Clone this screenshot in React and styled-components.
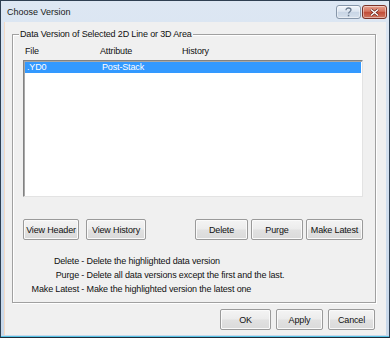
import { Fragment } from 'react';
import styled, { createGlobalStyle } from 'styled-components';

const GlobalStyle = createGlobalStyle`
  html, body {
    margin: 0;
    padding: 0;
    background: #ffffff;
  }
  body {
    font-family: "Liberation Sans", Arial, sans-serif;
  }
`;

const Window = styled.div`
  width: 390px;
  height: 338px;
  box-sizing: border-box;
  border: 1px solid #2e3f52;
  border-bottom-color: #1f2b38;
  background: linear-gradient(#dde7f3, #c8d8ea);
  padding: 0 3px 2px;
  display: flex;
  flex-direction: column;
  font-size: 9px;
  letter-spacing: -0.15px;
  color: #111;
  box-shadow: inset 0 -1px 0 #55c3e6;
`;

const TitleBar = styled.div`
  height: 21px;
  display: flex;
  align-items: center;
  padding-left: 3px;
`;

const Title = styled.span`
  flex: 1;
  font-size: 9px;
  letter-spacing: 0;
  color: #1a1a1a;
  padding-top: 1px;
`;

const CaptionButtons = styled.div`
  display: flex;
  gap: 1px;
  align-self: flex-start;
  margin-top: 4px;
  margin-right: -1px;
`;

const CaptionButton = styled.div`
  width: 25px;
  height: 14px;
  box-sizing: border-box;
  border: 1px solid ${(p) => (p.$close ? '#7a3228' : '#8797aa')};
  border-radius: 3px;
  display: flex;
  align-items: center;
  justify-content: center;
  background: ${(p) =>
    p.$close
      ? 'linear-gradient(#e6a08f 0%, #d47460 45%, #c04a36 50%, #cf7761 100%)'
      : 'linear-gradient(#f2f6fb 0%, #dce5f0 45%, #c8d5e5 50%, #d6e0ec 100%)'};
  box-shadow: inset 0 0 0 1px rgba(255, 255, 255, 0.45);
`;

const Client = styled.div`
  flex: 1;
  background: #f0f0f0;
  display: flex;
  flex-direction: column;
  padding: 12px 10px 0 8px;
  box-shadow: inset 1px 0 0 #f3d9c4;
`;

const GroupBox = styled.div`
  position: relative;
  height: 269px;
  box-sizing: border-box;
  border: 1px solid #a0a0a0;
  box-shadow: inset 1px 1px 0 #fff, 1px 1px 0 #fff;
  padding: 11px 12px 0 10px;
  display: flex;
  flex-direction: column;
`;

const Legend = styled.span`
  position: absolute;
  top: -7px;
  left: 6px;
  padding: 0 1px;
  background: #f0f0f0;
  line-height: 12px;
`;

const HeaderRow = styled.div`
  display: flex;
  height: 14px;
  line-height: 11px;
  padding-left: 2px;
`;

const Col = styled.span`
  width: ${(p) => p.$w}px;
  flex: none;
`;

const ListBox = styled.div`
  height: 137px;
  box-sizing: border-box;
  background: #fff;
  border: 1px solid;
  border-color: #828282 #e3e3e3 #e3e3e3 #828282;
  box-shadow: inset 1px 1px 0 #a8a8a8;
  padding: 1px 1px 0 1px;
`;

const ListRow = styled.div`
  display: flex;
  height: 11px;
  line-height: 11px;
  padding-left: 2px;
  background: ${(p) => (p.$selected ? '#3399ff' : 'transparent')};
  color: ${(p) => (p.$selected ? '#fff' : '#000')};
`;

const ButtonRow = styled.div`
  display: flex;
  margin-top: 22px;
  gap: 7px;
`;

const Spacer = styled.div`
  flex: 1;
`;

const ButtonGroup = styled.div`
  display: flex;
  gap: ${(p) => p.$gap}px;
`;

const Button = styled.button`
  width: ${(p) => p.$w}px;
  height: 21px;
  box-sizing: border-box;
  padding: 0;
  margin: 0;
  font-family: inherit;
  font-size: 9px;
  letter-spacing: -0.15px;
  color: #111;
  border: 1px solid #9a9a9a;
  border-radius: 2px;
  background: linear-gradient(#f4f4f4 0%, #ececec 48%, #e1e1e1 52%, #dadada 100%);
  box-shadow: inset 0 0 0 1px #fafafa;
`;

const Notes = styled.div`
  display: grid;
  grid-template-columns: 56px auto;
  margin-top: 14px;
  line-height: 14px;
`;

const NoteKey = styled.span`
  text-align: right;
`;

const NoteText = styled.span`
  white-space: pre;
`;

const Footer = styled.div`
  display: flex;
  justify-content: flex-end;
  gap: 5px;
  margin-top: 6px;
  padding-right: 1px;
`;

const notes = [
  ['Delete', 'Delete the highlighted data version'],
  ['Purge', 'Delete all data versions except the first and the last.'],
  ['Make Latest', 'Make the highlighted version the latest one'],
];

export default function App() {
  return (
    <>
      <GlobalStyle />
      <Window>
        <TitleBar>
          <Title>Choose Version</Title>
          <CaptionButtons>
            <CaptionButton>
              <svg width="9" height="10" viewBox="0 0 9 10">
                <path
                  d="M2 3.2C2 1.6 3.2 1 4.5 1S7 1.8 7 3c0 1.6-2.5 1.8-2.5 3.6"
                  fill="none"
                  stroke="#6a7b8f"
                  strokeWidth="1.3"
                />
                <rect x="3.8" y="7.8" width="1.5" height="1.5" fill="#6a7b8f" />
              </svg>
            </CaptionButton>
            <CaptionButton $close>
              <svg width="11" height="9" viewBox="0 0 11 9">
                <path d="M2 1.5l7 6M9 1.5l-7 6" stroke="#5a1d16" strokeWidth="2.6" />
                <path d="M2 1.5l7 6M9 1.5l-7 6" stroke="#ffffff" strokeWidth="1.5" />
              </svg>
            </CaptionButton>
          </CaptionButtons>
        </TitleBar>
        <Client>
          <GroupBox>
            <Legend>Data Version of Selected 2D Line or 3D Area</Legend>
            <HeaderRow>
              <Col $w={75}>File</Col>
              <Col $w={82}>Attribute</Col>
              <Col $w={80}>History</Col>
            </HeaderRow>
            <ListBox>
              <ListRow $selected>
                <Col $w={75}>.YD0</Col>
                <Col $w={82}>Post-Stack</Col>
              </ListRow>
            </ListBox>
            <ButtonRow>
              <ButtonGroup $gap={7}>
                <Button $w={56}>View Header</Button>
                <Button $w={60}>View History</Button>
              </ButtonGroup>
              <Spacer />
              <ButtonGroup $gap={3}>
                <Button $w={53}>Delete</Button>
                <Button $w={52}>Purge</Button>
                <Button $w={57}>Make Latest</Button>
              </ButtonGroup>
            </ButtonRow>
            <Notes>
              {notes.map(([key, text]) => (
                <Fragment key={key}>
                  <NoteKey>{key}</NoteKey>
                  <NoteText>{' - ' + text}</NoteText>
                </Fragment>
              ))}
            </Notes>
          </GroupBox>
          <Footer>
            <Button $w={51}>OK</Button>
            <Button $w={47}>Apply</Button>
            <Button $w={47}>Cancel</Button>
          </Footer>
        </Client>
      </Window>
    </>
  );
}
